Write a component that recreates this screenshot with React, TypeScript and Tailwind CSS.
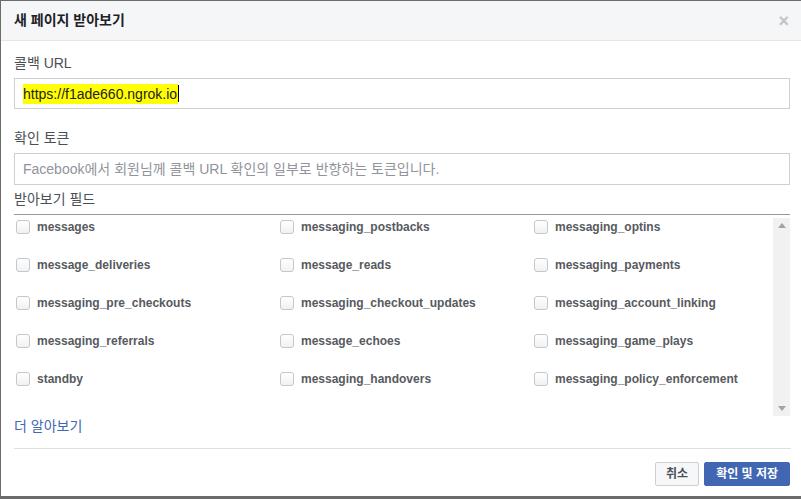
import React from 'react';

const fields = [
  'messages', 'messaging_postbacks', 'messaging_optins',
  'message_deliveries', 'message_reads', 'messaging_payments',
  'messaging_pre_checkouts', 'messaging_checkout_updates', 'messaging_account_linking',
  'messaging_referrals', 'message_echoes', 'messaging_game_plays',
  'standby', 'messaging_handovers', 'messaging_policy_enforcement',
];

const font = { fontFamily: '"Liberation Sans", Arial, "Noto Sans CJK KR", sans-serif' };

export default function App() {
  return (
    <div className="w-[801px] h-[499px] bg-[#6b6b6b] overflow-hidden" style={font}>
      <div className="ml-px mt-px w-[800px] h-[495px] bg-white flex flex-col">
        <header className="h-[40px] shrink-0 bg-[#f5f6f7] border-b border-[#e5e5e5] flex items-center justify-between pl-[13px] pr-[12px]">
          <h1 className="text-[14px] font-bold text-[#1d2129]">새 페이지 받아보기</h1>
          <span className="text-[#bec2c9] text-[18px] leading-none font-bold">×</span>
        </header>

        <div className="px-[13px] pr-[11px] flex flex-col">
          <label className="mt-[13px] text-[14px] text-[#4b4f56] leading-[18px]">콜백 URL</label>
          <div className="mt-[6px] h-[31px] border border-[#ccd0d5] flex items-center pl-[8px]">
            <span className="bg-[#ffff00] text-[14px] text-[#1d2129] leading-[20px] pr-px">https://f1ade660.ngrok.io</span>
            <span className="w-px h-[17px] bg-black" />
          </div>

          <label className="mt-[20px] text-[14px] text-[#4b4f56] leading-[18px]">확인 토큰</label>
          <div className="mt-[6px] h-[32px] border border-[#ccd0d5] flex items-center pl-[8px]">
            <span className="text-[14px] text-[#90949c]">Facebook에서 회원님께 콜백 URL 확인의 일부로 반향하는 토큰입니다.</span>
          </div>

          <label className="mt-[5px] text-[14px] text-[#4b4f56] leading-[18px]">받아보기 필드</label>
          <div className="mt-[6px] h-px bg-[#999]" />

          <div className="mt-[3px] h-[198px] flex">
            <div className="flex-1 grid grid-cols-[264px_254px_1fr] auto-rows-[38px] pt-px">
              {fields.map(f => (
                <div key={f} className="flex items-start pl-[2px]">
                  <span className="mt-[1px] w-[14px] h-[14px] rounded-[3px] border border-[#c4c7cc] bg-gradient-to-b from-white to-[#f0f1f2]" />
                  <span className="ml-[7px] text-[12px] font-bold text-[#575a60] leading-[16px]">{f}</span>
                </div>
              ))}
            </div>
            <div className="w-[17px] bg-[#f1f1f1] flex flex-col justify-between items-center py-[5px]">
              <svg width="8" height="5" viewBox="0 0 8 5"><path d="M4 0 L8 5 L0 5 Z" fill="#a3a3a3" /></svg>
              <svg width="8" height="5" viewBox="0 0 8 5"><path d="M0 0 L8 0 L4 5 Z" fill="#a3a3a3" /></svg>
            </div>
          </div>

          <a className="mt-px text-[14px] text-[#4267b2] leading-[18px]">더 알아보기</a>
          <div className="mt-[13px] mr-[-1px] h-px bg-[#dddfe2]" />

          <div className="mt-[13px] flex justify-end gap-[5px]">
            <button className="h-[24px] px-[10px] border border-[#ccd0d5] bg-[#f6f7f9] text-[12px] font-bold text-[#4b4f56] rounded-[2px]">취소</button>
            <button className="h-[24px] px-[11px] border border-[#4267b2] bg-[#4267b2] text-[12px] font-bold text-white rounded-[2px]">확인 및 저장</button>
          </div>
        </div>
      </div>
    </div>
  );
}
